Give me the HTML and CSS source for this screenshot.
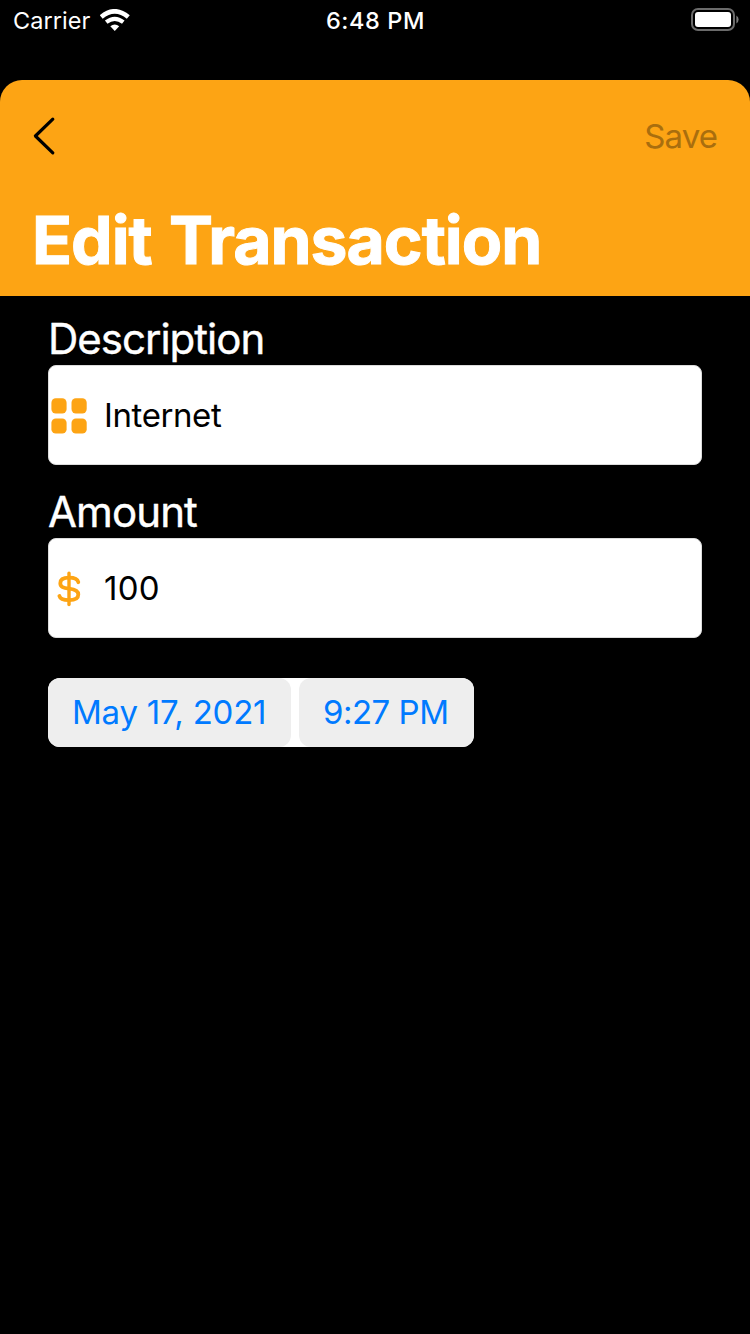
FILE: index.html
```html
<!DOCTYPE html>
<html lang="en">
<head>
<meta charset="utf-8">
<title>Edit Transaction</title>
<link rel="stylesheet" href="styles.css">
</head>
<body>
<div class="status">
  <div class="status-left">
    <span class="carrier">Carrier</span>
    <svg class="wifi" width="30" height="23" viewBox="0 0 30 23" fill="none" stroke="#fff">
      <path d="M1.2 8Q14.75-3.4 28.3 8" stroke-width="4.6"/>
      <path d="M6.2 13.2Q14.75 6.4 23.3 13.2" stroke-width="4.1"/>
      <path d="M10.3 17.2Q14.75 13.6 19.2 17.2L14.75 22Z" fill="#fff" stroke="none"/>
    </svg>
  </div>
  <span class="time">6:48 PM</span>
  <div class="status-right">
    <svg width="48" height="24" viewBox="0 0 48 24">
      <rect x="1" y="1" width="42" height="21" rx="6" fill="none" stroke="#6b6b6b" stroke-width="2"/>
      <rect x="4" y="4" width="36" height="15" rx="3" fill="#fff"/>
      <path d="M45.4 7.5Q47.6 9 47.6 11.5T45.4 15.5Z" fill="#7b7b7b"/>
    </svg>
  </div>
</div>
<main class="sheet">
  <header class="header">
    <nav class="nav">
      <svg class="back" width="24" height="40" viewBox="0 0 24 40" fill="none" stroke="#000" stroke-width="3.2" stroke-linecap="round" stroke-linejoin="round"><path d="M19.8 3.2L2.4 20L19.8 36.8"/></svg>
      <span class="save">Save</span>
    </nav>
    <h1 class="title">Edit Transaction</h1>
  </header>
  <form class="form">
    <div class="group">
      <label class="label label-description">Description</label>
      <div class="field">
        <svg class="icon" width="40" height="40" viewBox="0 0 40 40" fill="#fda414">
          <rect x="2.4" y="3.3" width="15.2" height="15.2" rx="4.4"/>
          <rect x="22.5" y="3.3" width="15.2" height="15.2" rx="4.4"/>
          <rect x="2.4" y="23.4" width="15.2" height="15.2" rx="4.4"/>
          <rect x="22.5" y="23.4" width="15.2" height="15.2" rx="4.4"/>
        </svg>
        <span class="value value-text">Internet</span>
      </div>
    </div>
    <div class="group">
      <label class="label label-amount">Amount</label>
      <div class="field">
        <svg class="icon" width="40" height="40" viewBox="0 0 40 40" fill="none" stroke="#fda414" stroke-width="3.8" stroke-linecap="round">
          <path d="M20 5.1V36.6" stroke-width="3.4"/>
          <path d="M29.3 14.2C28.5 10.7 25 9.7 20 9.7C14.6 9.7 11.3 11.6 11.3 15.2C11.3 19 14.4 20 20 20.7C26.2 21.4 29.3 22.9 29.3 26.5C29.3 30.4 26 32.2 20 32.2C14.7 32.2 11.2 31 10.4 28"/>
        </svg>
        <span class="value value-number">100</span>
      </div>
    </div>
    <div class="datetime">
      <span class="chip chip-date">May 17, 2021</span>
      <span class="chip chip-time">9:27 PM</span>
    </div>
  </form>
</main>
</body>
</html>
```
FILE: styles.css
```css
* { box-sizing: border-box; }
body {
  margin: 0;
  width: 750px;
  height: 1334px;
  overflow: hidden;
  background: #000;
  color: #fff;
  font-family: Inter, "Liberation Sans", sans-serif;
  white-space: nowrap;
}
.status {
  display: grid;
  grid-template-columns: 1fr auto 1fr;
  height: 80px;
  padding: 0 11px 0 13px;
  font-size: 23.5px;
  line-height: 41px;
}
.status-left { display: flex; align-items: flex-start; gap: 9px; }
.carrier { width: 78px; letter-spacing: 0.05px; }
.wifi { margin-top: 9px; }
.time { margin-left: -1px; font-weight: 550; letter-spacing: 0.6px; }
.status-right { display: flex; justify-content: flex-end; padding-top: 8px; }
.sheet { display: flex; flex-direction: column; }
.header {
  height: 216px;
  padding: 32px 33px 0;
  background: #fda414;
  border-radius: 22px 22px 0 0;
}
.nav { display: flex; justify-content: space-between; height: 48px; }
.back { margin: 4px 0 0; }
.save {
  font-size: 33px;
  line-height: 49px;
  letter-spacing: -0.9px;
  color: #a96e0e;
}
.title {
  margin: 40px 0 0 -1px;
  font-size: 66px;
  line-height: 80px;
  font-weight: 700;
  letter-spacing: -1px;
  word-spacing: 2.5px;
  -webkit-text-stroke: 1px #fff;
}
.form { display: flex; flex-direction: column; padding: 17px 48px 0; }
.group { height: 173px; }
.label {
  display: block;
  height: 52px;
  line-height: 52px;
  font-size: 42px;
  -webkit-text-stroke: 0.4px #fff;
}
.label-description { letter-spacing: -1px; }
.label-amount { letter-spacing: -0.9px; }
.field {
  display: flex;
  align-items: center;
  height: 100px;
  background: #fff;
  border: 1px solid #dcdcdc;
  border-radius: 8px;
}
.value {
  margin-left: 15px;
  color: #000;
  font-size: 33px;
  line-height: 48px;
}
.value-text { letter-spacing: -0.4px; }
.value-number { letter-spacing: 0.3px; }
.icon { flex: none; }
.datetime {
  display: flex;
  gap: 8px;
  width: 426px;
  height: 69px;
  margin-top: 19px;
  background: #fff;
  border-radius: 12px;
}
.chip {
  padding-left: 24px;
  background: #eee;
  border-radius: 12px;
  color: #007aff;
  font-size: 33px;
  line-height: 69px;
}
.chip-date { width: 243px; letter-spacing: -0.22px; }
.chip-time { width: 175px; letter-spacing: -0.5px; }
```
